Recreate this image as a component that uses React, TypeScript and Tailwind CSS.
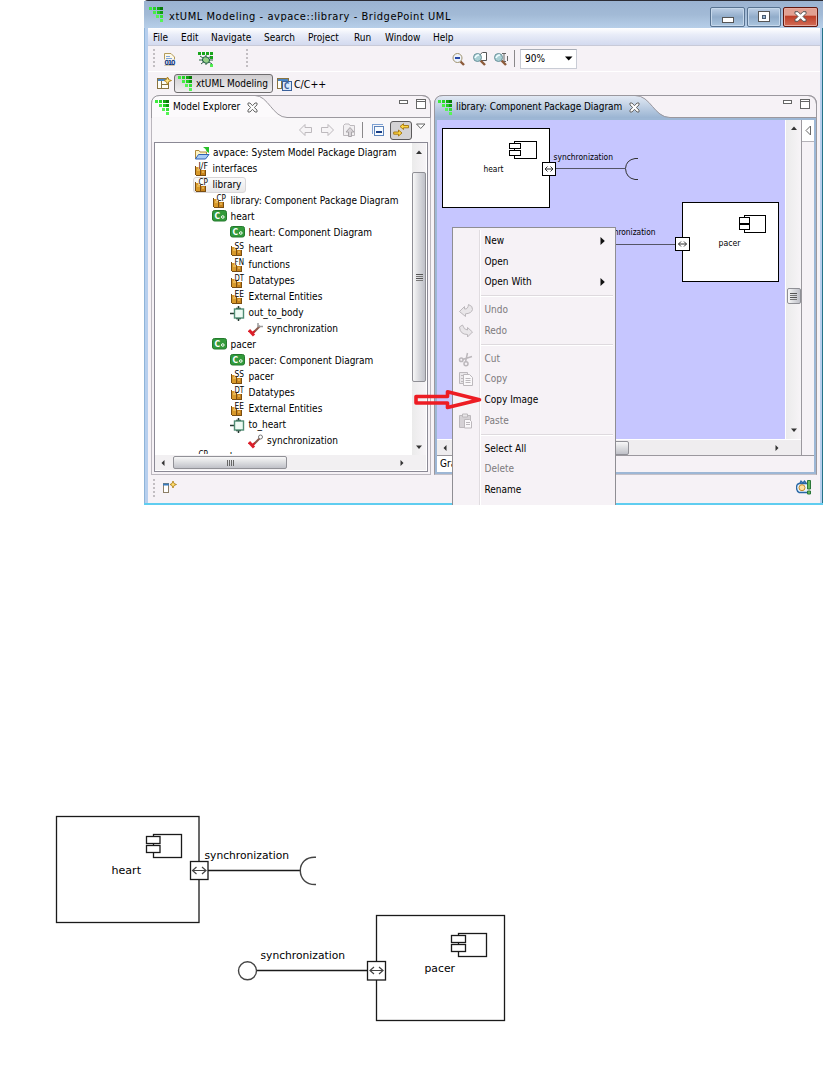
import React from "react";

const UI = "font-['DejaVu_Sans_Condensed','DejaVu_Sans',sans-serif] [font-stretch:condensed]";

function Logo() {
  const cells: [number, number, string][] = [
    [0, 0, "#3dea3d"], [4, 0, "#25d425"], [8, 0, "#12a512"], [11, 0, "#087a08"],
    [4, 4, "#46ee46"], [8, 4, "#22cf22"], [11, 4, "#109c10"],
    [7, 8, "#55f555"], [11, 8, "#35e035"],
    [11, 12, "#55f555"],
  ];
  return (
    <svg width="14" height="15" viewBox="0 0 14 15" shapeRendering="crispEdges" className="shrink-0">
      {cells.map(([x, y, c]) => <rect key={`${x}-${y}`} x={x} y={y} width="3" height="3" fill={c} />)}
    </svg>
  );
}

function Grip() {
  return (
    <svg width="3" height="22" shapeRendering="crispEdges" className="shrink-0">
      {[1, 5, 9, 13, 17].map((y) => <rect key={y} x="0" y={y} width="2" height="2" fill="#c2bec2" />)}
    </svg>
  );
}

function PackageIcon({ label }: { label: string }) {
  return (
    <svg width="15" height="15" viewBox="0 0 15 15" className="shrink-0 overflow-visible">
      <path d="M1 5H7V14H2V12H1Z" fill="#d99a2b" />
      <path d="M7 8H12V14H7Z" fill="#c8841c" />
      <path d="M1.5 4V13M6.5 7V13M2 13.5H12M11.5 8V14" stroke="#7a4e12" fill="none" />
      <path d="M3 8H6M8 10H10" stroke="#f7d47c" />
      <path d="M4.5 0H14V7H4.5Z" fill="#fff" opacity=".85" />
      <text x="4.500" y="6.500" fontSize="8.5" textLength="9.500" lengthAdjust="spacingAndGlyphs" fill="#000">{label}</text>
    </svg>
  );
}

function ComponentIcon() {
  return (
    <svg width="15" height="15" viewBox="0 0 15 15" className="shrink-0 overflow-visible">
      <rect x="0.5" y="0.5" width="14" height="10.5" rx="2" fill="#329a3b" stroke="#237a2d" />
      <text x="2.6" y="8.8" fontSize="8.5" fontWeight="bold" fill="#fff">C</text>
      <circle cx="10.8" cy="7" r="1.3" fill="none" stroke="#fff" />
    </svg>
  );
}

function PortIcon() {
  return (
    <svg width="15" height="15" viewBox="0 0 15 15" className="shrink-0">
      <path d="M0 7.5H4M6 2.5H11M6 12.5H11M8.5 0V3M8.5 12V15" stroke="#263b32" strokeWidth="1.5" />
      <rect x="4.5" y="3" width="9" height="9" fill="#eefaf3" stroke="#4f8c73" strokeWidth="1.4" />
    </svg>
  );
}

function SyncIcon({ ball }: { ball?: boolean }) {
  return (
    <svg width="16" height="15" viewBox="0 0 16 15" className="shrink-0">
      <path d="M5 11L12 4" stroke="#8c5a4c" strokeWidth="2" />
      <path d="M1 8L6 13.5" stroke="#dc1f2a" strokeWidth="3" />
      <path d="M4 11L7 9" stroke="#dc1f2a" strokeWidth="2" />
      {ball
        ? <circle cx="12.5" cy="3" r="2" fill="#fff" stroke="#777" />
        : <path d="M10 1V4.5H15" fill="none" stroke="#9a9a9a" strokeWidth="1.5" />}
    </svg>
  );
}

function FolderIcon() {
  return (
    <svg width="16" height="15" viewBox="0 0 16 15" className="shrink-0">
      <path d="M1.5 13V4.5H5L6 6H12.5V9" fill="#fdf4c5" stroke="#b18a3a" />
      <path d="M1.5 13L4.5 8.5H15L11.5 13Z" fill="#a8ccf5" stroke="#3263b4" />
      <path d="M9 1H15V7L12.7 5.4L11.5 3Z" fill="#28c02a" />
    </svg>
  );
}

type Row = { d: number; i: React.ReactNode; t: string; sel?: boolean };
const rows: Row[] = [
  { d: 0, i: <FolderIcon />, t: "avpace: System Model Package Diagram" },
  { d: 0, i: <PackageIcon label="I/F" />, t: "interfaces" },
  { d: 0, i: <PackageIcon label="CP" />, t: "library", sel: true },
  { d: 1, i: <PackageIcon label="CP" />, t: "library: Component Package Diagram" },
  { d: 1, i: <ComponentIcon />, t: "heart" },
  { d: 2, i: <ComponentIcon />, t: "heart: Component Diagram" },
  { d: 2, i: <PackageIcon label="SS" />, t: "heart" },
  { d: 2, i: <PackageIcon label="FN" />, t: "functions" },
  { d: 2, i: <PackageIcon label="DT" />, t: "Datatypes" },
  { d: 2, i: <PackageIcon label="EE" />, t: "External Entities" },
  { d: 2, i: <PortIcon />, t: "out_to_body" },
  { d: 3, i: <SyncIcon />, t: "synchronization" },
  { d: 1, i: <ComponentIcon />, t: "pacer" },
  { d: 2, i: <ComponentIcon />, t: "pacer: Component Diagram" },
  { d: 2, i: <PackageIcon label="SS" />, t: "pacer" },
  { d: 2, i: <PackageIcon label="DT" />, t: "Datatypes" },
  { d: 2, i: <PackageIcon label="EE" />, t: "External Entities" },
  { d: 2, i: <PortIcon />, t: "to_heart" },
  { d: 3, i: <SyncIcon ball />, t: "synchronization" },
  { d: 0, i: <PackageIcon label="CP" />, t: "card" },
];
const indent = ["pl-[39px]", "pl-[57px]", "pl-[75px]", "pl-[93px]"];

function Tree() {
  return (
    <div className="mb-px min-w-0 flex-1 overflow-hidden pt-[2px]">
      {rows.map((r, k) => (
        <div key={k} className={`flex h-4 items-center ${indent[r.d]}`}>
          <div className={r.sel
            ? "-ml-px flex h-4 items-center gap-[3px] rounded-[3px] border border-[#d8d6d8] bg-gradient-to-b from-[#fbfbfb] to-[#e8e7e8] pr-1"
            : "flex items-center gap-[3px]"}>
            {r.i}
            <span className={r.d === 0 && k > 0 || r.d > 0 && r.d < 3 ? "ml-[0.5px] whitespace-pre leading-4" : "whitespace-pre leading-4"}>{r.t}</span>
          </div>
        </div>
      ))}
    </div>
  );
}

function Tri({ dir }: { dir: "u" | "d" | "l" | "r" }) {
  const p = { u: "M1 6L4 2.5L7 6Z", d: "M1 2.5H7L4 6Z", l: "M5.5 1V7L2.5 4Z", r: "M2.5 1V7L5.5 4Z" }[dir];
  return <svg width="8" height="8" className="shrink-0"><path d={p} fill="#333" /></svg>;
}

function PaneButtons() {
  return (
    <svg width="28" height="11" shapeRendering="crispEdges" className="shrink-0">
      <rect x="0.5" y="1.5" width="8" height="3" fill="#fff" stroke="#666" />
      <rect x="17.5" y="0.5" width="9" height="9" fill="#fff" stroke="#666" />
      <path d="M17 2.5H27" stroke="#666" />
    </svg>
  );
}

function TabClose() {
  return (
    <svg width="11" height="11" viewBox="0 0 11 11" className="shrink-0">
      <path d="M1 1H3L5.5 3.7L8 1H10V3L7.3 5.5L10 8V10H8L5.5 7.3L3 10H1V8L3.7 5.5L1 3Z" fill="#fdfdfd" stroke="#666" />
    </svg>
  );
}

function Header() {
  return (
    <div className="flex h-[27px] items-center bg-gradient-to-b from-[#9bb3d1] via-[#a2bad6] to-[#b7cfe9] pl-[5px] pr-[5px]">
      <Logo />
      <span className="ml-[6px] flex-1 whitespace-pre pt-1 text-[11px] leading-4 tracking-[0.55px]">xtUML Modeling - avpace::library - BridgePoint UML</span>
      <div className="flex gap-[2px] pt-1">
        <div className="flex h-5 w-[35px] items-end justify-center rounded-[2px] border border-[#587391] bg-gradient-to-b from-[#bed0e6] via-[#91acca] to-[#abc6df] pb-[3px] shadow-[inset_0_0_0_1px_#c6d8eb]">
          <div className="h-[6px] w-3 border border-[#555] bg-white" />
        </div>
        <div className="flex h-5 w-[34px] items-center justify-center rounded-[2px] border border-[#587391] bg-gradient-to-b from-[#bed0e6] via-[#91acca] to-[#abc6df] shadow-[inset_0_0_0_1px_#c6d8eb]">
          <div className="flex h-[11px] w-3 items-center justify-center border border-[#555] bg-white">
            <div className="h-1 w-1 border border-[#4c5d70] bg-[#9ab5d2]" />
          </div>
        </div>
        <div className="flex h-5 w-[35px] items-center justify-center rounded-[2px] border border-[#61170f] bg-gradient-to-b from-[#e2a092] from-40% via-[#bd3c26] via-45% to-[#d26c55] shadow-[inset_0_0_0_1px_#e8aa9d]">
          <svg width="13" height="11" viewBox="0 0 13 11">
            <path d="M1 .7H4L6.5 3.3L9 .7H12V2.5L9 5.5L12 8.5V10.3H9L6.5 7.7L4 10.3H1V8.5L4 5.5L1 2.5Z" fill="#fff" stroke="#555" />
          </svg>
        </div>
      </div>
    </div>
  );
}

function Magnifier({ kind }: { kind: "minus" | "page" | "text" }) {
  return (
    <svg width="16" height="16" viewBox="0 0 16 16" className="shrink-0">
      {kind === "page" && <path d="M8.5 8V3L10.5 1.5H14.5V9.5H9" fill="#fff" stroke="#555" />}
      {kind === "text" && <path d="M9 2.5H13M11 2V11M9 10.5H13M14.5 5V10" stroke="#666" fill="none" />}
      <path d="M8.5 9.5L13 14" stroke="#8c5a3a" strokeWidth="2.4" />
      {kind === "minus"
        ? <><circle cx="6.5" cy="7" r="4.5" fill="#eef3fc" stroke="#a0936d" /><path d="M4 7H9" stroke="#2748a8" strokeWidth="2" /></>
        : <><circle cx="5.5" cy="6.5" r="4" fill="#a9cfd4" stroke="#69909a" /><path d="M3 7Q4 4 7 4" fill="none" stroke="#eefcff" strokeWidth="1.4" /></>}
    </svg>
  );
}

function Toolbar() {
  return (
    <div className="flex h-[26px] items-center border-b border-white bg-[#f6f2f6] pl-[5px]">
      <Grip />
      <svg width="14" height="15" viewBox="0 0 14 15" className="ml-[7px] mt-[2px] shrink-0">
        <path d="M1.5 13.5V1.5H8L11.5 5V13.5Z" fill="#fdf9e8" stroke="#b49b5a" />
        <path d="M3 4.5H7M3 6.5H9" stroke="#7fa3dc" />
        <rect x="1" y="7.5" width="12" height="6" fill="#eef4ff" />
        <text x="1.5" y="13.3" fontSize="7" fontWeight="bold" textLength="11" fill="#173a7c">010</text>
      </svg>
      <svg width="16" height="15" viewBox="0 0 16 15" className="ml-[21px] mt-px shrink-0">
        <path d="M0 0H3V3H0ZM4 0H7V3H4ZM8 0H11V3H8ZM12 0H15V3H12ZM12 4H15V7H12Z" fill="#18a51b" />
        <rect x="12" y="12" width="3" height="3" fill="#51ef51" />
        <path d="M2 4L14 12M3 12L13 4M8 3V13M1 8H15" stroke="#2d6145" />
        <ellipse cx="8" cy="8" rx="3.5" ry="3" fill="#94cf86" stroke="#205c46" transform="rotate(30 8 8)" />
      </svg>
      <div className="ml-[32px] flex w-[205px]"><Grip /></div>
      <div className="mt-px flex gap-[5px]"><Magnifier kind="minus" /><Magnifier kind="page" /><Magnifier kind="text" /></div>
      <div className="ml-[5px] h-[17px] w-px bg-[#8a888a]" />
      <div className="ml-[5px] flex h-5 w-[57px] items-center justify-between border border-[#c9ccd5] border-t-[#a9aeb8] bg-white pl-1 pr-[3px] text-[10px]">
        <span>90%</span>
        <svg width="8" height="5"><path d="M0 0.5H7.5L3.7 4.5Z" fill="#000" /></svg>
      </div>
    </div>
  );
}

function PerspectiveIcon({ c }: { c?: boolean }) {
  return (
    <svg width="15" height="14" viewBox="0 0 15 14" className="shrink-0">
      <rect x="0.5" y="1.5" width="11" height="10" fill="#fdfdf6" stroke="#8a7440" />
      <path d="M1 3H11" stroke="#4a85c4" strokeWidth="2" />
      <path d="M4.5 4V11M5 7.5H11" stroke="#8a7440" />
      {c
        ? <><rect x="5.5" y="4.5" width="9" height="9" fill="#dbe9fb" stroke="#3b619c" /><text x="7" y="12" fontSize="8" fontWeight="bold" fill="#3b619c">C</text></>
        : <path d="M10.5 0L11.7 2.6L14.5 3.5L11.7 4.7L10.5 7.5L9.3 4.7L7 3.5L9.3 2.6Z" fill="#ffe58a" stroke="#a97a10" strokeWidth=".8" />}
    </svg>
  );
}

function Perspectives() {
  return (
    <div className="flex h-[23px] items-center bg-[#f6f2f6] pl-[9px]">
      <PerspectiveIcon />
      <div className="ml-[2px] flex h-[19px] w-[99px] items-center gap-[4px] rounded-[3px] border border-[#6f6d6f] bg-gradient-to-b from-[#cfcdcf] to-[#f0eef0] pl-[3px]">
        <Logo />
        <span className="whitespace-pre">xtUML Modeling</span>
      </div>
      <div className="ml-1 flex items-center gap-[2px]"><PerspectiveIcon c /><span className="text-[10.5px]">C/C++</span></div>
    </div>
  );
}

function ScrollThumbV({ cls }: { cls: string }) {
  return (
    <div className={`flex w-[14px] flex-col items-center justify-center gap-px rounded-[2px] border border-[#8f8f95] bg-gradient-to-r from-[#f8f8f8] via-[#d9dade] to-[#bfc0c8] ${cls}`}>
      <div className="h-px w-[7px] bg-[#555]" /><div className="h-px w-[7px] bg-[#777]" /><div className="h-px w-[7px] bg-[#555]" /><div className="h-px w-[7px] bg-[#777]" />
    </div>
  );
}

function ModelExplorer() {
  return (
    <div className="flex w-[280px] flex-col rounded-t-[9px] border border-[#bbb7be] border-t-[#9b989e]">
      <div className="relative flex h-[22px] items-center pl-[3px]">
        <svg width="280" height="23" className="absolute -left-px -top-px">
          <path d="M0.5 23V9Q0.5 0.5 9 0.5H104C117 0.5 122 22.5 138 22.5H0Z" fill="#fcfafc" />
          <path d="M0.5 23V9Q0.5 0.5 9 0.5H104C117 0.5 122 22.5 136 22.5H279.5V9Q279.5 0.5 271 0.5H104" fill="none" stroke="#9b989e" />
        </svg>
        <div className="relative flex flex-1 items-center">
          <Logo />
          <span className="ml-1 w-[74px] whitespace-pre">Model Explorer</span>
          <TabClose />
        </div>
        <div className="relative mr-[3px] -mt-[5px]"><PaneButtons /></div>
      </div>
      <div className="flex h-[24px] items-center justify-end bg-[#f9f7f9] pr-[4px]">
        <svg width="60" height="16" viewBox="0 0 60 16" className="mr-[4px]">
          <path d="M7 2.5L1.5 8L7 13.5V10.5H13.5V5.5H7Z M30 2.5L35.500 8L30 13.5V10.500H23.500V5.500H30Z" fill="#f6f4f6" stroke="#bdb9bd" />
          <path d="M45.500 13.500V3.500L47 2H51L52 3.500H56.500V13.500Z" fill="#f2f0f2" stroke="#bdb9bd" />
          <path d="M52 5.500L48 10H50.500V14.500H53.500V10H56Z" fill="#d7d3d7" stroke="#aaa6aa" />
        </svg>
        <div className="h-4 w-px bg-[#8a888a]" />
        <svg width="13" height="14" viewBox="0 0 13 14" className="ml-[9px]" shapeRendering="crispEdges">
          <path d="M0.500 10.500V1.500H10.500" fill="none" stroke="#7da1d3" />
          <rect x="2.500" y="3.500" width="9" height="9" fill="#f7fbff" stroke="#5d83ba" /><path d="M4 8.500H10" stroke="#1a3f87" strokeWidth="2" />
        </svg>
        <div className="ml-[5px] flex h-[19px] w-[22px] items-center justify-center rounded-[3px] border border-[#5b595b] bg-[#d4d2d4]">
          <svg width="16" height="14" viewBox="0 0 16 14">
            <path d="M7 3.500L10.500 .7V2.500H15.500V4.800H10.500V6.500ZM9 10L5.500 7V9H.7V11.200H5.500V13Z" fill="#ffd641" stroke="#a2730c" strokeWidth=".9" />
          </svg>
        </div>
        <svg width="10" height="7" className="mb-[7px] ml-[4px]"><path d="M0.500 1H9L4.700 5.500Z" fill="#fff" stroke="#666" /></svg>
      </div>
      <div className="mb-[2px] ml-[2px] mr-[2px] flex min-h-0 flex-1 flex-col border border-[#8b8995] bg-white pb-[1px] pr-[1px]">
        <div className="flex min-h-0 flex-1">
          <Tree />
          <div className="flex w-[14px] flex-col items-center bg-gradient-to-r from-[#ebebeb] to-[#f7f4f7] pt-[5px] pb-[4px]">
            <Tri dir="u" />
            <div className="h-4" />
            <ScrollThumbV cls="h-[210px]" />
            <div className="flex-1" />
            <Tri dir="d" />
          </div>
        </div>
        <div className="flex h-[15px] items-center bg-[#f2f0f2] pl-1">
          <Tri dir="l" />
          <div className="ml-[6px] flex h-[13px] w-[114px] items-center justify-center gap-px rounded-[2px] border border-[#919197] bg-gradient-to-b from-[#f8f8f8] via-[#dcdde0] to-[#c0c1c8]">
            {[0, 1, 2, 3].map((n) => <div key={n} className="h-[6px] w-px bg-[#666]" />)}
          </div>
          <div className="flex-1" />
          <div className="mr-[20px] flex"><Tri dir="r" /></div>
        </div>
      </div>
    </div>
  );
}

function DText({ x, y, w, s, t }: { x: number; y: number; w: number; s: number; t: string }) {
  return <text x={x} y={y} textLength={w} lengthAdjust="spacingAndGlyphs" fontSize={s} fill="#000" stroke="none">{t}</text>;
}

function CanvasDiagram() {
  return (
    <svg width="348" height="319" viewBox="437 120 348 319" className="shrink-0 bg-[#c6c6ff]">
      <g fill="#fff" stroke="#000" shapeRendering="crispEdges">
        <rect x="442.500" y="128.500" width="107" height="79" />
        <rect x="514.500" y="141.500" width="22" height="17" />
        <rect x="509.500" y="143.500" width="11" height="5" />
        <rect x="509.500" y="150.500" width="11" height="5" />
        <path d="M555 168.500H625M616 244.500H676" stroke="#555566" />
        <rect x="542.500" y="162.500" width="13" height="13" />
        <rect x="682.500" y="202.500" width="96" height="79" />
        <rect x="744.500" y="215.500" width="21" height="17" />
        <rect x="739.500" y="217.500" width="10" height="6" />
        <rect x="739.500" y="224.500" width="10" height="5" />
        <rect x="675.500" y="237.500" width="14" height="13" />
      </g>
      <path d="M638 158.500H635Q626 160 625.500 168.500Q626 178 635 179.500H638" fill="none" stroke="#333" />
      <path d="M545 169H553M547.500 166.500L545 169L547.500 171.500M550.500 166.500L553 169L550.500 171.500M678.500 244H686.500M681 241.500L678.500 244L681 246.500M684 241.500L686.500 244L684 246.500" fill="none" stroke="#333" />
      <DText x={483.500} y={172} w={20} s={8} t="heart" />
      <DText x={553.500} y={159.500} w={59.500} s={8.500} t="synchronization" />
      <DText x={596.500} y={235} w={59} s={8.500} t="synchronization" />
      <DText x={718.500} y={245.500} w={22} s={8} t="pacer" />
    </svg>
  );
}

function Editor() {
  return (
    <div className="ml-[3px] flex w-[383px] flex-col rounded-t-[9px] border border-b-[#c5c1c8] border-l-[#9b989e] border-r-[#9b989e] border-t-[#9b989e]">
      <div className="relative flex h-[22px] items-center pl-[3px]">
        <svg width="383" height="23" className="absolute -left-px -top-px">
          <defs>
            <linearGradient id="tab" x1="0" y1="0" x2="0" y2="1"><stop offset="0" stopColor="#e3eaf4" /><stop offset="1" stopColor="#9ab4d2" /></linearGradient>
          </defs>
          <path d="M0.500 23V9Q0.500 0.500 9 0.500H201C217 0.500 220 22.500 238 22.500V23Z" fill="url(#tab)" />
          <path d="M0.500 23V9Q0.500 0.500 9 0.500H201C217 0.500 220 22.500 236 22.500H382.500V9Q382.500 0.500 374 0.500H201" fill="none" stroke="#9b989e" />
        </svg>
        <div className="relative flex flex-1 items-center">
          <Logo />
          <span className="ml-1 w-[173px] whitespace-pre tracking-[-0.05px]">library: Component Package Diagram</span>
          <TabClose />
        </div>
        <div className="relative mr-[5px] -mt-[5px]"><PaneButtons /></div>
      </div>
      <div className="flex min-h-0 flex-1 flex-col border-[2px] border-[#9db7d5] bg-[#f6f2f6]">
        <div className="flex h-[335px]">
          <div className="flex w-[364px] flex-col">
            <div className="flex h-[319px]">
              <CanvasDiagram />
              <div className="flex w-4 flex-col items-center border-l border-white bg-gradient-to-r from-[#ebebeb] to-[#f7f4f7] pb-[5px] pt-[4px]">
                <Tri dir="u" />
                <div className="h-[156px]" />
                <ScrollThumbV cls="h-4" />
                <div className="flex-1" />
                <Tri dir="d" />
              </div>
            </div>
            <div className="flex h-4 items-center border-t border-white bg-[#efedef] pl-[4px]">
              <Tri dir="l" />
              <div className="ml-[65px] h-[14px] w-[115px] rounded-[2px] border border-[#919197] bg-gradient-to-b from-[#f8f8f8] via-[#dcdde0] to-[#c0c1c8]" />
              <div className="flex-1" />
              <div className="mr-[20px]"><Tri dir="r" /></div>
            </div>
          </div>
          <div className="flex min-w-0 flex-1 flex-col border-l border-[#9b989e]">
            <div className="flex h-[22px] items-center justify-center border-b border-[#b5b2b8] bg-white">
              <svg width="7" height="11"><path d="M5.500 1V10L1 5.500Z" fill="#fff" stroke="#666" /></svg>
            </div>
          </div>
        </div>
        <div className="flex flex-1 border-t border-[#9b989e]">
          <div className="flex w-[40px] items-center bg-white pl-[3px]">Gra</div>
        </div>
      </div>
    </div>
  );
}

function MenuIcon({ kind }: { kind: string }) {
  return (
    <svg width="16" height="16" viewBox="0 0 16 16" fill="#e9e6e9" stroke="#bcb8bc" className="shrink-0">
      {kind === "undo" && <path d="M1.500 9.500L6.500 4.500V7Q10 7.500 10.500 2.500Q15 4 14.500 7.500Q13.500 11.500 7.500 11.800V14.500Z" />}
      {kind === "redo" && <path d="M14.500 9L9.500 4.500V7Q6 7 4.500 2L1.500 4Q2 11.500 9.500 11.500V14Z" />}
      {kind === "cut" && <g fill="none" strokeWidth="1.500"><path d="M9.500 2L7.500 11M14 5.500L4.500 8.500" /><circle cx="3.300" cy="8.800" r="1.800" /><circle cx="8" cy="12.700" r="2" /></g>}
      {kind === "copy" && <><path d="M1.500 1.500H9.500V12.500H1.500Z" /><path d="M5.500 3.500H11.500L14.500 6.500V14.500H5.500Z" fill="#faf8fa" /><path d="M3 4.500H5M3 7.500H5M3 10.500H5M7.500 7.500H12.500M7.500 9.500H12.500M7.500 11.500H12.500" /></>}
      {kind === "paste" && <><path d="M1.500 2.500H12.500V14.500H1.500Z" fill="#d5d1d5" /><path d="M4.500 1H9.500V4H4.500Z" /><path d="M6.500 6.500H11.500L13.500 8.500V15H6.500Z" fill="#faf8fa" /><path d="M8 9.500H12M8 11.500H12" /></>}
    </svg>
  );
}

type Item = { t: string; off?: boolean; sub?: boolean; icon?: string } | null;
const items: Item[] = [
  { t: "New", sub: true }, { t: "Open" }, { t: "Open With", sub: true }, null,
  { t: "Undo", off: true, icon: "undo" }, { t: "Redo", off: true, icon: "redo" }, null,
  { t: "Cut", off: true, icon: "cut" }, { t: "Copy", off: true, icon: "copy" }, { t: "Copy Image" },
  { t: "Paste", off: true, icon: "paste" }, null,
  { t: "Select All" }, { t: "Delete", off: true }, { t: "Rename" },
];

function ContextMenu() {
  return (
    <div className="absolute left-[452px] top-[227px] h-[278px] w-[164px] overflow-hidden border border-b-0 border-[#8f8e93] bg-[#f6f2f6] pt-[2.5px]">
      <div className="absolute bottom-0 left-[26px] top-[2px] w-[2px] border-l border-[#e0dce0] bg-white" />
      {items.map((m, k) => m ? (
        <div key={k} className="relative flex h-[20.7px] items-center">
          <div className="flex w-[31.5px] pl-[5px]">{m.icon && <MenuIcon kind={m.icon} />}</div>
          <span className={m.off ? "flex-1 text-[#7d7a7d]" : "flex-1 text-black"}>{m.t}</span>
          {m.sub && <svg width="6" height="8" className="mr-[9px]"><path d="M0.500 0V8L4.800 4Z" fill="#111" /></svg>}
        </div>
      ) : (
        <div key={k} className="relative flex h-[7.2px] items-center pl-[28px] pr-[2px]">
          <div className="h-[2px] flex-1 border-b border-white bg-[#dedade]" />
        </div>
      ))}
    </div>
  );
}

function ExportedDiagram() {
  return (
    <svg width="823" height="571" viewBox="0 505 823 571" className="block">
      <g fill="#fff" stroke="#1a1a1a" strokeWidth="1.300">
        <rect x="56.500" y="816.500" width="142.500" height="106" />
        <rect x="153.500" y="834.500" width="28" height="23" />
        <rect x="146.500" y="836.500" width="13.500" height="7" />
        <rect x="146.500" y="845.500" width="13.500" height="7" />
        <path d="M208 870.500H300" />
        <rect x="190.500" y="861.500" width="17.500" height="18" />
        <rect x="376.500" y="915.500" width="128" height="105" />
        <rect x="458.500" y="933.500" width="28" height="23" />
        <rect x="451.500" y="935.500" width="14" height="7" />
        <rect x="451.500" y="944.500" width="14" height="7" />
        <path d="M256 970.500H368" />
        <rect x="367.500" y="961.500" width="18" height="18.500" />
      </g>
      <g fill="none" stroke="#444" strokeWidth="1.400">
        <path d="M316 857.300C306 856.500 300.300 863 300.300 870.500C300.300 878.500 306 885 316 884.500" />
        <circle cx="247.500" cy="970.800" r="9" />
        <path d="M192.500 870.500H206M196.500 867L192.500 870.500L196.500 874M202 867L206 870.500L202 874M370 970.500H383M374 967L370 970.500L374 974M379 967L383 970.500L379 974" strokeWidth="1.200" />
      </g>
      <DText x={111.500} y={874.300} w={29.500} s={11} t="heart" />
      <DText x={204.500} y={858.500} w={84.500} s={11} t="synchronization" />
      <DText x={260.500} y={958.500} w={84.500} s={11} t="synchronization" />
      <DText x={424.500} y={972} w={30.500} s={11} t="pacer" />
    </svg>
  );
}

const menus: [string, string][] = [
  ["File", "w-[28px]"], ["Edit", "w-[30px]"], ["Navigate", "w-[53px]"], ["Search", "w-[44px]"],
  ["Project", "w-[46px]"], ["Run", "w-[31px]"], ["Window", "w-[48px]"], ["Help", "w-[30px]"],
];

export default function App() {
  return (
    <div className={`relative h-[1076px] w-[823px] overflow-hidden bg-white text-[10px] leading-[14px] text-black ${UI}`}>
      <div className="ml-[144px] flex h-[505px] w-[679px] flex-col rounded-tl-[4px] border-b-2 border-t border-b-[#5fcdf0] border-t-[#2b2b33] bg-[#b7cfee]">
        <Header />
        <div className="flex min-h-0 flex-1 border-l border-r border-l-[#8fb4d8] border-r-[#257489] pl-[3px] pr-[2px]">
          <div className="flex min-w-0 flex-1 flex-col bg-[#f6f2f6]">
            <div className="flex h-[18px] items-center border-b border-[#c8cad8] bg-gradient-to-b from-white via-[#e8ecf8] via-40% to-[#d3daef] pl-[5px] pt-[3px]">
              {menus.map(([m, w]) => <span key={m} className={`${w} shrink-0`}>{m}</span>)}
            </div>
            <Toolbar />
            <Perspectives />
            <div className="flex h-[380px] pl-[3px]">
              <ModelExplorer />
              <Editor />
            </div>
            <div className="flex flex-1 items-center pl-[5px] pr-2">
              <Grip />
              <svg width="14" height="14" viewBox="0 0 14 14" className="mb-[3px] ml-[7px]">
                <rect x="0.500" y="2.500" width="5" height="9" fill="#fff" stroke="#8d7f66" />
                <path d="M0 3.500H6" stroke="#397abb" strokeWidth="2" />
                <path d="M10 0L11 2.500L13.500 3.500L11 4.500L10 7L9 4.500L7 3.500L9 2.500Z" fill="#ffdf70" stroke="#a97a10" strokeWidth=".8" />
              </svg>
              <div className="flex-1" />
              <svg width="16" height="16" viewBox="0 0 16 16" className="mb-[5px]">
                <path d="M11 13.500H3Q0.500 12 0.500 8.500Q0.500 5 3 4.500H11M4 4L5 2L7 4L8.500 2L10 4" fill="#e8f3fd" stroke="#2867a5" strokeWidth="1.300" />
                <circle cx="6" cy="8.700" r="3" fill="#ffe0a0" stroke="#c48a28" />
                <path d="M11.500 1.500H14.500V10H11.500ZM11.500 12H14.500V15H11.500Z" fill="#68b85c" stroke="#2a7738" />
              </svg>
            </div>
          </div>
        </div>
      </div>
      <ExportedDiagram />
      <ContextMenu />
      <svg width="70" height="22" viewBox="413 389 70 22" className="absolute left-[413px] top-[389px]">
        <path d="M416 396.500H447.500V391.800L479.500 399.700L447.500 407.500V403H416Z" fill="none" stroke="#ed1c24" strokeWidth="3.600" strokeLinejoin="round" />
      </svg>
    </div>
  );
}
